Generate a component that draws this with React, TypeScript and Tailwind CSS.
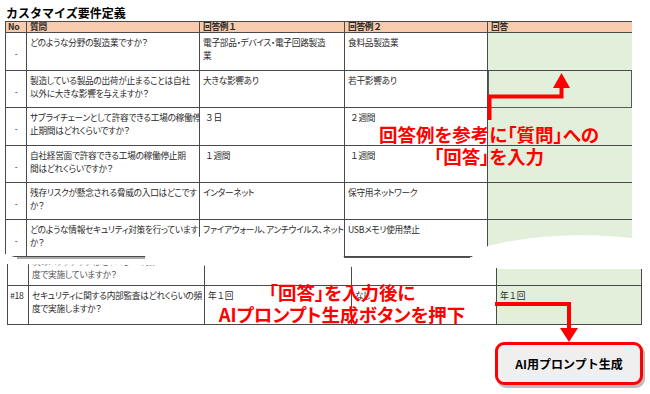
import React from "react";

const cols = "grid grid-cols-[22px_173px_145px_143px_144px]";
const colsBottom = "grid grid-cols-[22px_176px_147px_145px_145px]";
const cell = "border-r border-b border-[#4a4a4a] px-[3px] pt-[3px] overflow-hidden whitespace-nowrap";

// 全角数字は palt を外して幅を保つ
function Z({ children }: { children: React.ReactNode }) {
  return <span className="[font-feature-settings:normal]">{children}</span>;
}

const rows = [
  { h: "h-[38px]", q: ["どのような分野の製造業ですか？"], a1: ["電子部品・デバイス・電子回路製造", "業"], a2: ["食料品製造業"] },
  { h: "h-[37px]", q: ["製造している製品の出荷が止まることは自社", "以外に大きな影響を与えますか？"], a1: ["大きな影響あり"], a2: ["若干影響あり"], sel: true },
  { h: "h-[38px]", q: ["サプライチェーンとして許容できる工場の稼働停", "止期間はどれくらいですか？"], a1: [<span className="pl-[2px]"><Z>３</Z>日</span>], a2: [<span className="pl-[2px]"><Z>２</Z>週間</span>] },
  { h: "h-[37px]", q: ["自社経営面で許容できる工場の稼働停止期", "間はどれくらいですか？"], a1: [<span className="pl-[2px]"><Z>１</Z>週間</span>], a2: [<span className="pl-[2px]"><Z>１</Z>週間</span>] },
  { h: "h-[37px]", q: ["残存リスクが懸念される脅威の入口はどこです", "か？"], a1: ["インターネット"], a2: ["保守用ネットワーク"] },
  { h: "h-[37px]", q: ["どのような情報セキュリティ対策を行っています", "か？"], a1: ["ファイアウォール、アンチウイルス、ネット", "ワーク監視"], a2: ["USBメモリ使用禁止"] },
];

function Lines({ lines }: { lines: React.ReactNode[] }) {
  return (
    <>
      {lines.map((l, i) => (
        <div key={i}>{l}</div>
      ))}
    </>
  );
}

export default function App() {
  return (
    <div
      className="relative w-[650px] h-[394px] overflow-hidden bg-white text-[#2a2a2a]"
      style={{ fontFamily: "'Noto Sans CJK JP', 'Noto Sans', sans-serif" }}
    >
      {/* タイトル */}
      <div className="pl-[6px] pt-[5px] h-[21px] text-[12px] leading-[16px] font-bold text-black">
        カスタマイズ要件定義
      </div>

      {/* 上の表 */}
      <div className="ml-[5px] w-[627px] text-[8.7px] leading-[13px] tracking-[-0.3px] [font-feature-settings:'palt']">
        <div className={`${cols} h-[12px] bg-[#f8cbad] border-t border-[#4a4a4a] font-bold leading-[10px]`}>
          <div className="border-l border-r border-b border-[#4a4a4a] px-[2px]">No</div>
          <div className="border-r border-b border-[#4a4a4a] px-[3px]">質問</div>
          <div className="border-r border-b border-[#4a4a4a] px-[3px]">回答例<Z>１</Z></div>
          <div className="border-r border-b border-[#4a4a4a] px-[3px]">回答例<Z>２</Z></div>
          <div className="border-b border-[#4a4a4a] px-[3px]">回答</div>
        </div>
        {rows.map((r, i) => (
          <div key={i} className={`${cols} ${r.h}`}>
            <div className="border-l border-r border-b border-[#4a4a4a] flex items-center justify-center pt-[4px]">-</div>
            <div className={cell}>
              <Lines lines={r.q} />
            </div>
            <div className={cell}>
              <Lines lines={r.a1} />
            </div>
            <div className={cell}>
              <Lines lines={r.a2} />
            </div>
            <div
              className={`bg-[#e2efda] border-b border-[#4a4a4a] ${r.sel ? "border-r border-l border-[#5a5a5a]" : ""}`}
            />
          </div>
        ))}
      </div>

      {/* 下の表 */}
      <div className="ml-[7px] mt-[7px] w-[635px] text-[8.7px] leading-[13px] tracking-[-0.3px] [font-feature-settings:'palt']">
        <div className={`${colsBottom} h-[22px]`}>
          <div className="border-l border-r border-b border-[#4a4a4a]" />
          <div className="border-r border-b border-[#4a4a4a] px-[3px] overflow-hidden whitespace-nowrap">
            <div className="-mt-[9px] text-[#555]">
              <div>次のバックアップはどれくらいの頻</div>
              <div>度で実施していますか？</div>
            </div>
          </div>
          <div className="border-r border-b border-[#4a4a4a]" />
          <div className="border-r border-b border-[#4a4a4a]" />
          <div className="bg-[#e2efda] border-r border-b border-[#4a4a4a] mt-[5px]" />
        </div>
        <div className={`${colsBottom} h-[39px]`}>
          <div className="border-l border-r border-b border-[#4a4a4a] px-[2px] pt-[3px]">#18</div>
          <div className={cell}>
            <div>セキュリティに関する内部監査はどれくらいの頻</div>
            <div>度で実施しますか？</div>
          </div>
          <div className={cell}>年<Z>１</Z>回</div>
          <div className={cell}>なし</div>
          <div className="bg-[#e2efda] border-r border-b border-[#4a4a4a] px-[3px] pt-[3px]">年<Z>１</Z>回</div>
        </div>
      </div>

      {/* ボタン */}
      <div className="ml-[495px] mt-[17px] w-[148px] h-[43px] flex items-center justify-center rounded-[9px] border-[3px] border-[#ff0000] bg-[#efefef] shadow-[2px_3px_0_#bdbdbd] text-[12px] font-bold text-black">
        AI用プロンプト生成
      </div>

      {/* 破れ目 */}
      <svg className="absolute left-0 top-0 pointer-events-none" width="650" height="394">
        <path
          d="M0,252 L17,258 L145,258 L148,237 L340,236 L344,258 L470,258 L488,246 Q560,228 650,240 L650,267 L497,268 L0,264 Z"
          fill="#ffffff"
        />
        <path d="M17,258 L145,258" stroke="#555" strokeWidth="1.2" />
        <path d="M344,257.5 L470,257.5" stroke="#555" strokeWidth="1.2" />
      </svg>

      {/* 注釈 */}
      <div className="absolute left-[339px] top-[123px] w-[300px] text-center text-[18.5px] leading-[22px] font-bold text-[#ff0000] [font-feature-settings:'palt']">
        <div>回答例を参考に「質問」への</div>
        <div>「回答」を入力</div>
      </div>
      <div className="absolute left-[192px] top-[281px] w-[300px] text-center text-[18.5px] leading-[22px] font-bold text-[#ff0000] [font-feature-settings:'palt']">
        <div>「回答」を入力後に</div>
        <div>AIプロンプト生成ボタンを押下</div>
      </div>

      {/* 矢印 */}
      <svg className="absolute left-0 top-0 pointer-events-none" width="650" height="394">
        <polyline points="489.5,120 489.5,96.5 561.5,96.5 561.5,86" fill="none" stroke="#ff0000" strokeWidth="4" />
        <polygon points="553,88 570,88 561.5,73" fill="#ff0000" />
        <polyline points="495,304 569,304 569,330" fill="none" stroke="#ff0000" strokeWidth="4" />
        <polygon points="560,328 578,328 569,342" fill="#ff0000" />
      </svg>
    </div>
  );
}
